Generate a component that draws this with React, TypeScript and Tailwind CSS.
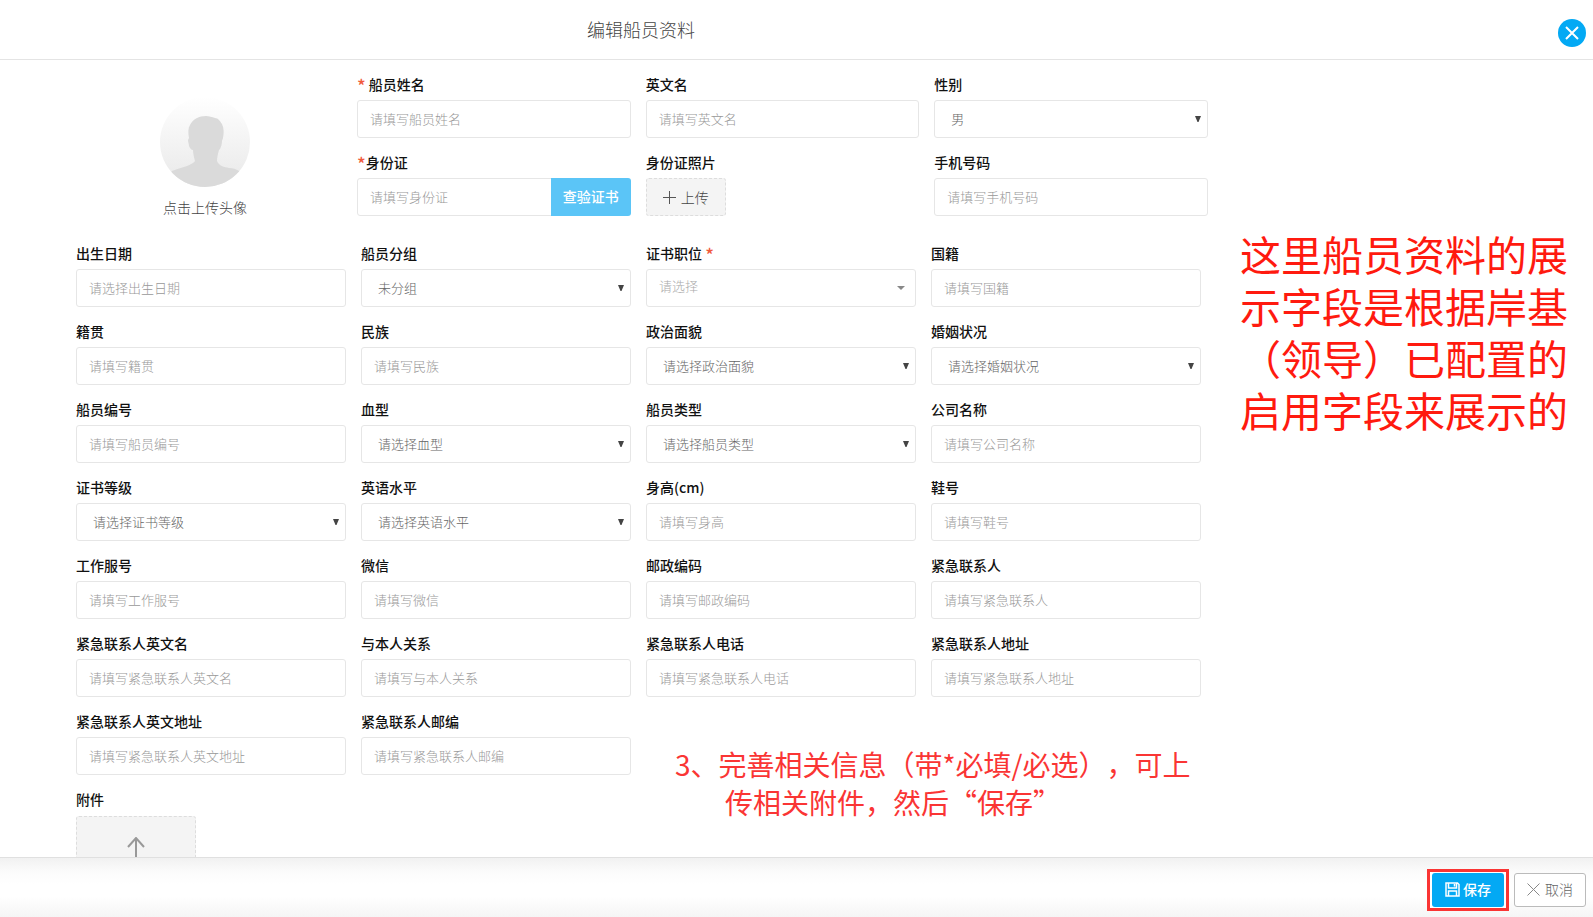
import React, { useState } from 'react';

type FieldType = 'input' | 'select' | 'picker';

interface Field {
  id: string;
  label: string;
  type: FieldType;
  hint: string;
  required?: boolean;
}

const fields: Field[] = [
  { id: 'birthday', label: '出生日期', type: 'input', hint: '请选择出生日期' },
  { id: 'group', label: '船员分组', type: 'select', hint: '未分组' },
  { id: 'position', label: '证书职位', type: 'picker', hint: '请选择', required: true },
  { id: 'nationality', label: '国籍', type: 'input', hint: '请填写国籍' },
  { id: 'hometown', label: '籍贯', type: 'input', hint: '请填写籍贯' },
  { id: 'ethnic', label: '民族', type: 'input', hint: '请填写民族' },
  { id: 'political', label: '政治面貌', type: 'select', hint: '请选择政治面貌' },
  { id: 'marriage', label: '婚姻状况', type: 'select', hint: '请选择婚姻状况' },
  { id: 'crewNo', label: '船员编号', type: 'input', hint: '请填写船员编号' },
  { id: 'blood', label: '血型', type: 'select', hint: '请选择血型' },
  { id: 'crewType', label: '船员类型', type: 'select', hint: '请选择船员类型' },
  { id: 'company', label: '公司名称', type: 'input', hint: '请填写公司名称' },
  { id: 'certLevel', label: '证书等级', type: 'select', hint: '请选择证书等级' },
  { id: 'english', label: '英语水平', type: 'select', hint: '请选择英语水平' },
  { id: 'height', label: '身高(cm)', type: 'input', hint: '请填写身高' },
  { id: 'shoe', label: '鞋号', type: 'input', hint: '请填写鞋号' },
  { id: 'uniform', label: '工作服号', type: 'input', hint: '请填写工作服号' },
  { id: 'wechat', label: '微信', type: 'input', hint: '请填写微信' },
  { id: 'postcode', label: '邮政编码', type: 'input', hint: '请填写邮政编码' },
  { id: 'contact', label: '紧急联系人', type: 'input', hint: '请填写紧急联系人' },
  { id: 'contactEn', label: '紧急联系人英文名', type: 'input', hint: '请填写紧急联系人英文名' },
  { id: 'relation', label: '与本人关系', type: 'input', hint: '请填写与本人关系' },
  { id: 'contactPhone', label: '紧急联系人电话', type: 'input', hint: '请填写紧急联系人电话' },
  { id: 'contactAddr', label: '紧急联系人地址', type: 'input', hint: '请填写紧急联系人地址' },
  { id: 'contactAddrEn', label: '紧急联系人英文地址', type: 'input', hint: '请填写紧急联系人英文地址' },
  { id: 'contactPost', label: '紧急联系人邮编', type: 'input', hint: '请填写紧急联系人邮编' },
];

const labelClass = 'block h-[18px] text-sm leading-[18px] font-medium text-[#111] mb-[7px]';
const controlClass =
  'block w-full h-[38px] rounded-[3px] border border-[#e6e6e6] bg-white text-[13px] font-light outline-none focus:border-[#03a9f4]';

function Star() {
  return <span className="inline-block h-[18px] align-top text-lg leading-5 text-[#f05a3c]">*</span>;
}

function TextInput({ id, hint }: { id: string; hint: string }) {
  return <input id={id} type="text" placeholder={hint} className={`${controlClass} px-3 pb-[2px] text-[#555] placeholder:text-[#999]`} />;
}

function SelectBox({ id, options }: { id: string; options: string[] }) {
  return (
    <div className="relative">
      <select id={id} className={`${controlClass} appearance-none px-4 text-[#666]`}>
        {options.map(option => (
          <option key={option}>{option}</option>
        ))}
      </select>
      <svg className="pointer-events-none absolute right-[7px] top-4 w-[6px] h-[6px]" viewBox="0 0 6 6">
        <path d="M0 0h6L3.5 6h-1z" fill="#444" />
      </svg>
    </div>
  );
}

function PickerBox({ id, hint }: { id: string; hint: string }) {
  return (
    <div className="relative">
      <select id={id} className={`${controlClass} appearance-none px-3 pb-1 text-[#aaa]`}>
        <option>{hint}</option>
      </select>
      <svg className="pointer-events-none absolute right-[11px] top-[17px] w-2 h-1" viewBox="0 0 8 4">
        <path d="M0 0h8L4 4z" fill="#888" />
      </svg>
    </div>
  );
}

function FormField({ field }: { field: Field }) {
  return (
    <div>
      <label htmlFor={field.id} className={labelClass}>
        {field.label} {field.required && <Star />}
      </label>
      {field.type === 'input' && <TextInput id={field.id} hint={field.hint} />}
      {field.type === 'select' && <SelectBox id={field.id} options={[field.hint]} />}
      {field.type === 'picker' && <PickerBox id={field.id} hint={field.hint} />}
    </div>
  );
}

function Avatar() {
  return (
    <svg className="w-[90px] h-[90px]" viewBox="0 0 90 90">
      <defs>
        <linearGradient id="avatarBg" x1="0" y1="0" x2="0" y2="1">
          <stop offset="0" stopColor="#fff" />
          <stop offset="1" stopColor="#e8e8e8" />
        </linearGradient>
        <clipPath id="avatarClip">
          <circle cx="45" cy="45" r="45" />
        </clipPath>
      </defs>
      <g clipPath="url(#avatarClip)">
        <rect width="90" height="90" fill="url(#avatarBg)" />
        <path
          d="M46 19C49 19 52 20 55 21C58 21 60 24 62 27C64 31 64 36 63 41C63 42 62 43 62 44C62 47 61 50 60 52L59 53C58 57 57 60 57 64C59 69 64 70 69 71C73 71 76 72 79 74L90 90H0L12 74C16 72 22 71 27 69C31 67 34 66 35 64C34 60 33 57 33 53C31 53 30 51 29 49C29 47 28 45 28 43L29 41C28 36 28 31 30 28C33 22 39 19 46 19Z"
          fill="#dadada"
        />
      </g>
    </svg>
  );
}

export default function App() {
  const [saving, setSaving] = useState(false);

  return (
    <div className="flex h-screen flex-col overflow-hidden bg-white font-['Noto_Sans_CJK_SC',sans-serif] [text-spacing-trim:space-all]">
      {/* 标题栏 */}
      <header className="flex h-[60px] shrink-0 items-center border-b border-[#e4e4e4] pr-[7px]">
        <h1 className="flex-1 pb-[2px] pl-[587px] text-lg font-light text-[#444]">编辑船员资料</h1>
        <button type="button" aria-label="关闭" className="mt-[6px] flex h-[28px] w-[28px] items-center justify-center rounded-full bg-[#03a9f4]">
          <svg className="h-[14px] w-[14px]" viewBox="0 0 14 14" fill="none" stroke="#fff" strokeWidth="2">
            <path d="M1 1l12 12M13 1L1 13" />
          </svg>
        </button>
      </header>

      <main className="flex min-h-0 flex-1 overflow-hidden">
        <form className="flex-1 pl-[76px] pt-[15px]">
          {/* 基本信息 */}
          <div className="flex items-start">
            <div className="mr-[23px] flex w-[258px] shrink-0 flex-col items-center pt-[22px]">
              <Avatar />
              <button type="button" className="mt-[10px] text-sm leading-5 font-light text-[#444]">点击上传头像</button>
            </div>
            <div className="grid flex-1 grid-cols-3 gap-[15px]">
              <div>
                <label htmlFor="name" className={labelClass}><Star /> 船员姓名</label>
                <TextInput id="name" hint="请填写船员姓名" />
              </div>
              <div>
                <label htmlFor="enName" className={labelClass}>英文名</label>
                <TextInput id="enName" hint="请填写英文名" />
              </div>
              <div>
                <label htmlFor="gender" className={labelClass}>性别</label>
                <SelectBox id="gender" options={['男', '女']} />
              </div>
              <div>
                <label htmlFor="idCard" className={labelClass}><Star />身份证</label>
                <div className="flex">
                  <TextInput id="idCard" hint="请填写身份证" />
                  <button type="button" className="-ml-1 h-[38px] w-20 shrink-0 rounded-r-[3px] bg-[#5bc5f7] pb-[2px] text-sm font-medium text-white">查验证书</button>
                </div>
              </div>
              <div>
                <label htmlFor="idPhoto" className={labelClass}>身份证照片</label>
                <button id="idPhoto" type="button" className="flex h-[38px] w-20 items-center justify-center gap-[5px] rounded-[3px] border border-dashed border-[#ddd] bg-[#f4f4f4] text-sm font-light text-[#444]">
                  <svg className="h-[13px] w-[13px]" viewBox="0 0 13 13" stroke="#555">
                    <path d="M6.5 0v13M0 6.5h13" />
                  </svg>
                  上传
                </button>
              </div>
              <div>
                <label htmlFor="mobile" className={labelClass}>手机号码</label>
                <TextInput id="mobile" hint="请填写手机号码" />
              </div>
            </div>
          </div>

          {/* 详细信息 */}
          <div className="mr-[7px] mt-[27px] grid grid-cols-4 gap-[15px]">
            {fields.map(field => (
              <FormField key={field.id} field={field} />
            ))}
            <p className="col-span-2 pl-[29px] pt-[33px] text-[28px] leading-[38px] whitespace-nowrap text-[#fa3534]">
              3、完善相关信息（带*必填/必选），可上
              <span className="-mb-[50px] block pl-[50px]">传相关附件，然后“保存”</span>
            </p>
            <div>
              <label htmlFor="attachment" className={labelClass}>附件</label>
              <button id="attachment" type="button" aria-label="上传附件" className="mt-2 flex h-[120px] w-[120px] justify-center rounded-[3px] border border-dashed border-[#ddd] bg-[#f4f4f4] pt-5">
                <svg className="h-6 w-[18px]" viewBox="0 0 18 24" fill="none" stroke="#999" strokeWidth="2">
                  <path d="M9 1v23M1 10l8-9 8 9" />
                </svg>
              </button>
            </div>
          </div>
        </form>

        <aside className="w-[385px] shrink-0 pl-8 pr-6 pt-[171px] font-['Liberation_Sans','Noto_Sans_CJK_SC',sans-serif] text-[41px] leading-[52px] whitespace-nowrap text-[#ff1a0f]">
          这里船员资料的展
          <br />
          示字段是根据岸基
          <br />
          （领导）已配置的
          <br />
          启用字段来展示的
        </aside>
      </main>

      <footer className="flex h-[60px] shrink-0 items-center justify-end gap-[5px] border-t border-[#e0e0e0] bg-[linear-gradient(#f1f1f1,#fcfcfc_25%,#fff_45%,#fff_65%,#f5f5f5)] pr-[7px] pt-[5px]">
        <div className="border-[3px] border-[#fa3534] bg-white px-[2px] py-px">
          <button
            type="button"
            onClick={() => setSaving(true)}
            disabled={saving}
            className="flex h-[34px] w-[72px] items-center justify-center gap-[3px] rounded-[3px] bg-[#03a9f4] pb-[2px] text-sm font-medium text-white"
          >
            <svg className="h-[15px] w-[15px]" viewBox="0 0 15 15" fill="none" stroke="#fff" strokeWidth="1.5">
              <path d="M1 1h11.5l1.5 1.5V14H1zM3.5 1v5h8V1M3.5 14V9h8v5M9.5 2v2.5" />
            </svg>
            保存
          </button>
        </div>
        <button type="button" className="flex h-[34px] w-[72px] items-center justify-center gap-[5px] rounded-[3px] border border-[#bbb] bg-white pb-[2px] text-sm font-light text-[#666]">
          <svg className="h-[13px] w-[13px]" viewBox="0 0 13 13" stroke="#888">
            <path d="M0.5 0.5l12 12M12.5 0.5l-12 12" />
          </svg>
          取消
        </button>
      </footer>
    </div>
  );
}
